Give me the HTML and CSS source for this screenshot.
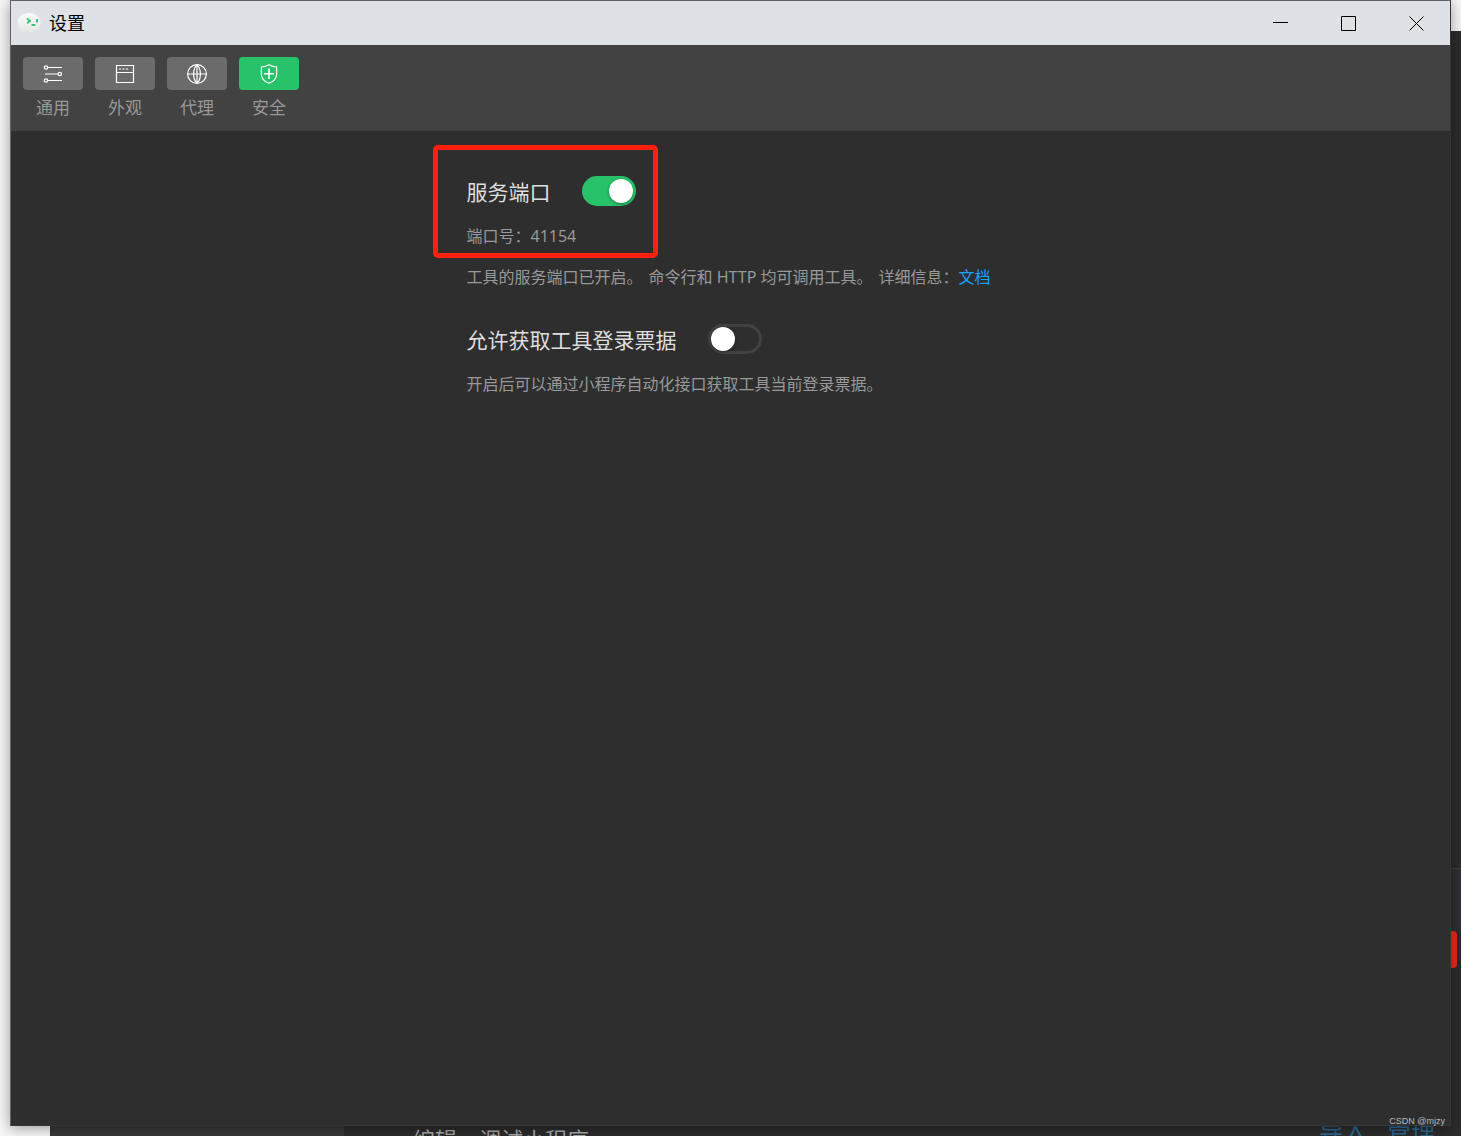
FILE: index.html
```html
<!DOCTYPE html>
<html lang="zh-CN">
<head>
<meta charset="utf-8">
<meta name="viewport" content="width=device-width, initial-scale=1">
<title>设置</title>
<link rel="stylesheet" href="styles.css">
</head>
<body>
<div class="desktop">
  <div class="backdrop">
    <div class="backdrop-sidebar"></div>
    <div class="backdrop-main"></div>
    <div class="backdrop-edge"></div>
    <div class="backdrop-panel"></div>
    <div class="backdrop-badge"></div>
    <span class="backdrop-caption">编辑、调试小程序</span>
    <span class="backdrop-links"><span>导入</span><span>管理</span></span>
  </div>

  <main class="window">
    <header class="titlebar">
      <svg class="app-logo" width="24" height="22" viewBox="0 0 24 22" aria-hidden="true">
        <defs><linearGradient id="bubble" x1="0" y1="0" x2="0" y2="1"><stop offset="0" stop-color="#fafafa"/><stop offset="1" stop-color="#e6e6e6"/></linearGradient></defs>
        <path d="M12 1C5.500 1 .5 5.200.5 10.500c0 3 1.500 5.600 4 7.400L4 21l4-1.700c1.300.4 2.600.6 4 .6 6.500 0 11.500-4.200 11.500-9.400S18.500 1 12 1z" fill="url(#bubble)"/>
        <path d="M10 6.500l3 2.500-3 2.200M14.500 13h4M20 7v3.500" fill="none" stroke="#3cc574" stroke-width="2"/>
      </svg>
      <h1 class="title">设置</h1>
      <div class="window-controls">
        <button type="button" aria-label="最小化"><svg width="15" height="15" viewBox="0 0 15 15"><path d="M0 6.500h15"/></svg></button>
        <button type="button" aria-label="最大化"><svg width="15" height="15" viewBox="0 0 15 15"><path d="M.5.5h14v14H.5z"/></svg></button>
        <button type="button" aria-label="关闭"><svg width="15" height="15" viewBox="0 0 15 15"><path d="M.5.500l14 14M14.500.5l-14 14"/></svg></button>
      </div>
    </header>

    <nav class="toolbar">
      <button class="tab" type="button">
        <span class="tab-icon"><svg width="20" height="20" viewBox="0 0 20 20"><path d="M5 3.500h14M2 10h13M5 16.500h14"/><circle cx="3" cy="3.500" r="1.700"/><circle cx="16.800" cy="10" r="1.700"/><circle cx="3" cy="16.500" r="1.700"/></svg></span>
        <span>通用</span>
      </button>
      <button class="tab" type="button">
        <span class="tab-icon"><svg width="20" height="20" viewBox="0 0 20 20"><path d="M1.500 1.500h17v17h-17zM1.500 8.500h17"/><path d="M4 5h2M7.500 5h2M11 5h2"/></svg></span>
        <span>外观</span>
      </button>
      <button class="tab" type="button">
        <span class="tab-icon"><svg width="20" height="20" viewBox="0 0 20 20"><circle cx="10" cy="10" r="9.400"/><path d="M.6 10h18.800M10 .6v18.800M10 .6C5.500 5 5.500 15 10 19.400M10 .6c4.500 4.400 4.500 14.400 0 18.800"/></svg></span>
        <span>代理</span>
      </button>
      <button class="tab active" type="button" aria-current="page">
        <span class="tab-icon"><svg width="20" height="20" viewBox="0 0 20 20"><path d="M10 .7c2.500 1.500 5 2.200 7.600 2.300v7.500c0 4-2.600 6.800-7.600 8.800-5-2-7.600-4.800-7.600-8.800V3C5 2.900 7.500 2.200 10 .7z"/><path d="M10 4.500v10.500M5 9.700h10" stroke-width="1.600"/></svg></span>
        <span>安全</span>
      </button>
    </nav>

    <section class="content">
      <div class="settings">
        <div class="highlight"></div>
        <div class="setting">
          <div class="setting-head">
            <label for="service-port">服务端口</label>
            <input class="switch" id="service-port" type="checkbox" role="switch" checked>
          </div>
          <p class="port">端口号：41154</p>
          <p class="note"><span class="sentence">工具的服务端口已开启。</span><span class="sentence">命令行和 HTTP 均可调用工具。</span>详细信息：<a href="#">文档</a></p>
        </div>
        <div class="setting">
          <div class="setting-head">
            <label for="login-ticket">允许获取工具登录票据</label>
            <input class="switch" id="login-ticket" type="checkbox" role="switch">
          </div>
          <p class="note">开启后可以通过小程序自动化接口获取工具当前登录票据。</p>
        </div>
      </div>
    </section>
  </main>
  <div class="watermark">CSDN @mjzy</div>
</div>
</body>
</html>
```
FILE: styles.css
```css
* { box-sizing: border-box; }

body {
  margin: 0;
  font-family: "Noto Sans", "Noto Sans CJK SC", sans-serif;
  font-size: 16px;
  color: #999;
}

h1, p { margin: 0; }

button {
  padding: 0;
  border: 0;
  background: none;
  font: inherit;
  color: inherit;
}

svg { display: block; }

.desktop {
  position: relative;
  display: flex;
  min-height: 100vh;
  padding: 0 10px 10px;
  overflow: hidden;
  background: #f8f8f8;
}

/* Windows lying behind the settings window */
.backdrop > * { position: absolute; }

.backdrop-sidebar {
  left: 50px;
  bottom: 0;
  width: 294px;
  height: 40px;
  background: #383838;
}

.backdrop-main {
  top: 31px;
  right: 0;
  bottom: 0;
  left: 344px;
  background: #2c2c2c;
}

.backdrop-edge {
  right: 0;
  top: 868px;
  width: 20px;
  height: 1px;
  background: #3f4144;
}

.backdrop-panel {
  right: 0;
  top: 869px;
  width: 20px;
  height: 62px;
  background: #2e3033;
}

.backdrop-badge {
  right: 4px;
  top: 931px;
  width: 20px;
  height: 37px;
  border-radius: 4px;
  background: #f0281e;
}

.backdrop-caption {
  left: 413px;
  bottom: -17px;
  font-size: 22px;
  line-height: 28px;
  color: #aaa;
}

.backdrop-links {
  display: flex;
  gap: 20px;
  right: 26px;
  bottom: -9px;
  font-size: 24px;
  line-height: 28px;
  color: #2a6893;
}

.window {
  position: relative;
  flex: 1;
  display: flex;
  flex-direction: column;
  border: 1px solid #626366;
  border-right-color: #353535;
  border-bottom-color: #353535;
  background: #2e2e2e;
  box-shadow: 0 2px 14px rgba(0, 0, 0, 0.4);
}

.titlebar {
  display: flex;
  align-items: center;
  height: 44px;
  padding-left: 6px;
  background: #dee1e6;
  color: #000;
}

.title {
  flex: 1;
  margin-left: 8px;
  font-size: 18px;
  font-weight: 400;
  line-height: 24px;
}

.window-controls { display: flex; }

.window-controls button {
  display: grid;
  place-items: center;
  width: 68px;
  height: 44px;
}

.window-controls svg {
  fill: none;
  stroke: #000;
}

.toolbar {
  display: flex;
  gap: 12px;
  height: 86px;
  padding: 12px 12px 8px;
  background: #424242;
}

.tab {
  display: flex;
  flex-direction: column;
  align-items: center;
  gap: 6px;
  width: 60px;
  font-size: 17px;
  line-height: 24px;
}

.tab-icon {
  flex: none;
  display: grid;
  place-items: center;
  width: 100%;
  height: 33px;
  border-radius: 4px;
  background: #6b6b6b;
}

.tab-icon svg {
  fill: none;
  stroke: #fff;
  stroke-width: 1.2;
}

.active .tab-icon { background: #27c269; }

.content { flex: 1; }

.settings {
  position: relative;
  max-width: 528px;
  margin: 0 auto;
  padding-top: 45px;
}

.setting { margin-bottom: 35px; }

.setting-head {
  display: flex;
  align-items: center;
  gap: 31px;
  height: 30px;
  font-size: 21px;
  color: #dedede;
}

.port, .note {
  margin-top: 18px;
  line-height: 24px;
}

.port + .note { margin-top: 17px; }

.sentence { margin-right: 6px; }

.note a {
  color: #1aa0ff;
  text-decoration: none;
  white-space: nowrap;
}

.switch {
  appearance: none;
  display: flex;
  align-items: center;
  width: 54px;
  height: 30px;
  margin: 0;
  padding: 0;
  border: 3px solid #424242;
  border-radius: 15px;
}

.switch::before {
  content: "";
  width: 24px;
  height: 24px;
  border-radius: 50%;
  background: #fff;
  box-shadow: 0 1px 3px rgba(0, 0, 0, 0.4);
}

.switch:checked {
  justify-content: flex-end;
  border-color: #27c269;
  background: #27c269;
}

/* Red callout drawn over the port setting */
.highlight {
  position: absolute;
  top: 14px;
  left: -34px;
  width: 225px;
  height: 113px;
  border: 5px solid #ff2010;
  border-radius: 5px;
  pointer-events: none;
}

.watermark {
  position: absolute;
  right: 16px;
  bottom: 8px;
  font-family: "Liberation Sans", sans-serif;
  font-size: 9px;
  line-height: 14px;
  color: #bbb;
}
```
